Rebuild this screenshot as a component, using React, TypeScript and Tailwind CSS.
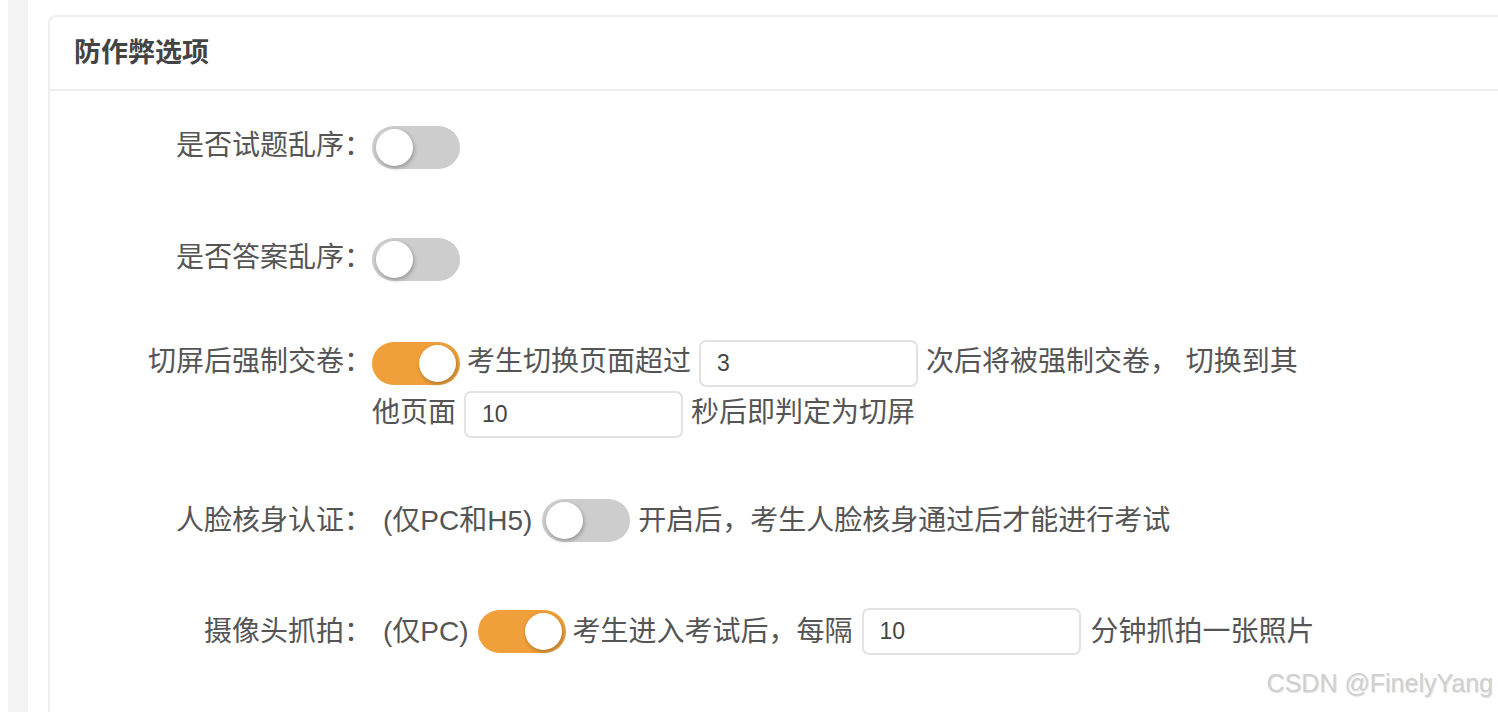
import React, { useState } from 'react';

type ToggleProps = { on: boolean; onChange: (v: boolean) => void };

function Toggle({ on, onChange }: ToggleProps) {
  return (
    <button
      type="button"
      onClick={() => onChange(!on)}
      className={`relative inline-flex h-[43px] w-[88px] shrink-0 items-center rounded-full align-middle transition-colors ${
        on ? 'bg-[#f0a03a]' : 'bg-[#cdcdcd]'
      }`}
    >
      <span
        className={`absolute top-[3px] h-[37px] w-[37px] rounded-full bg-white shadow-[1px_2px_4px_rgba(0,0,0,0.28)] transition-all ${
          on ? 'left-[47px]' : 'left-[4px]'
        }`}
      />
    </button>
  );
}

function NumInput({ value, onChange }: { value: string; onChange: (v: string) => void }) {
  return (
    <input
      value={value}
      onChange={(e) => onChange(e.target.value)}
      className="inline-block h-[47px] w-[219px] rounded-[7px] border-2 border-[#e2e2e2] bg-white px-[16px] align-middle text-[23px] text-[#444] outline-none"
    />
  );
}

function Row({ label, children, className = '' }: { label: string; children: React.ReactNode; className?: string }) {
  return (
    <div className={`flex items-start ${className}`}>
      <div className="w-[322px] shrink-0 text-right leading-[51px]">{label}</div>
      <div className="leading-[51px]">{children}</div>
    </div>
  );
}

export default function App() {
  const [shuffleQ, setShuffleQ] = useState(false);
  const [shuffleA, setShuffleA] = useState(false);
  const [switchLock, setSwitchLock] = useState(true);
  const [face, setFace] = useState(false);
  const [camera, setCamera] = useState(true);
  const [times, setTimes] = useState('3');
  const [seconds, setSeconds] = useState('10');
  const [minutes, setMinutes] = useState('10');

  return (
    <div className="relative flex h-[712px] w-full overflow-hidden bg-white font-['Liberation_Sans','Noto_Sans_CJK_SC',sans-serif] text-[28px] text-[#555]">
      <div className="ml-[8px] w-[20px] shrink-0 bg-[#f3f3f3]" />
      <div className="ml-[20px] mt-[15px] w-[1470px] shrink-0 rounded-tl-[8px] border-2 border-r-0 border-b-0 border-[#eeeeee]">
        {/* Header */}
        <div className="flex h-[74px] items-center border-b-2 border-[#eeeeee] pl-[24px]">
          <h2 className="text-[27px] font-bold text-[#444]">防作弊选项</h2>
        </div>

        <div className="pt-[29px]">
          <Row label="是否试题乱序：">
            <Toggle on={shuffleQ} onChange={setShuffleQ} />
          </Row>

          <Row label="是否答案乱序：" className="mt-[61px]">
            <Toggle on={shuffleA} onChange={setShuffleA} />
          </Row>

          <Row label="切屏后强制交卷：" className="mt-[53px]">
            <div className="w-[940px]">
              <Toggle on={switchLock} onChange={setSwitchLock} />
              <span className="ml-[7px]">考生切换页面超过</span>
              <span className="mx-[8px]">
                <NumInput value={times} onChange={setTimes} />
              </span>
              次后将被强制交卷， 切换到其他页面
              <span className="mx-[8px]">
                <NumInput value={seconds} onChange={setSeconds} />
              </span>
              秒后即判定为切屏
            </div>
          </Row>

          <Row label="人脸核身认证：" className="mt-[57px]">
            <div className="flex items-center">
              <span className="ml-[11px]">(仅PC和H5)</span>
              <span className="ml-[10px] flex">
                <Toggle on={face} onChange={setFace} />
              </span>
              <span className="ml-[8px]">开启后，考生人脸核身通过后才能进行考试</span>
            </div>
          </Row>

          <Row label="摄像头抓拍：" className="mt-[60px]">
            <div className="flex items-center">
              <span className="ml-[11px]">(仅PC)</span>
              <span className="ml-[9px] flex">
                <Toggle on={camera} onChange={setCamera} />
              </span>
              <span className="ml-[7px]">考生进入考试后，每隔</span>
              <span className="ml-[9px] flex">
                <NumInput value={minutes} onChange={setMinutes} />
              </span>
              <span className="ml-[10px]">分钟抓拍一张照片</span>
            </div>
          </Row>
        </div>
      </div>

      {/* watermark */}
      <div className="pointer-events-none absolute bottom-[10px] right-[5px] text-[25px] text-[#d0d0d0] [text-shadow:1px_1px_1px_rgba(0,0,0,0.12)]">
        CSDN @FinelyYang
      </div>
    </div>
  );
}
